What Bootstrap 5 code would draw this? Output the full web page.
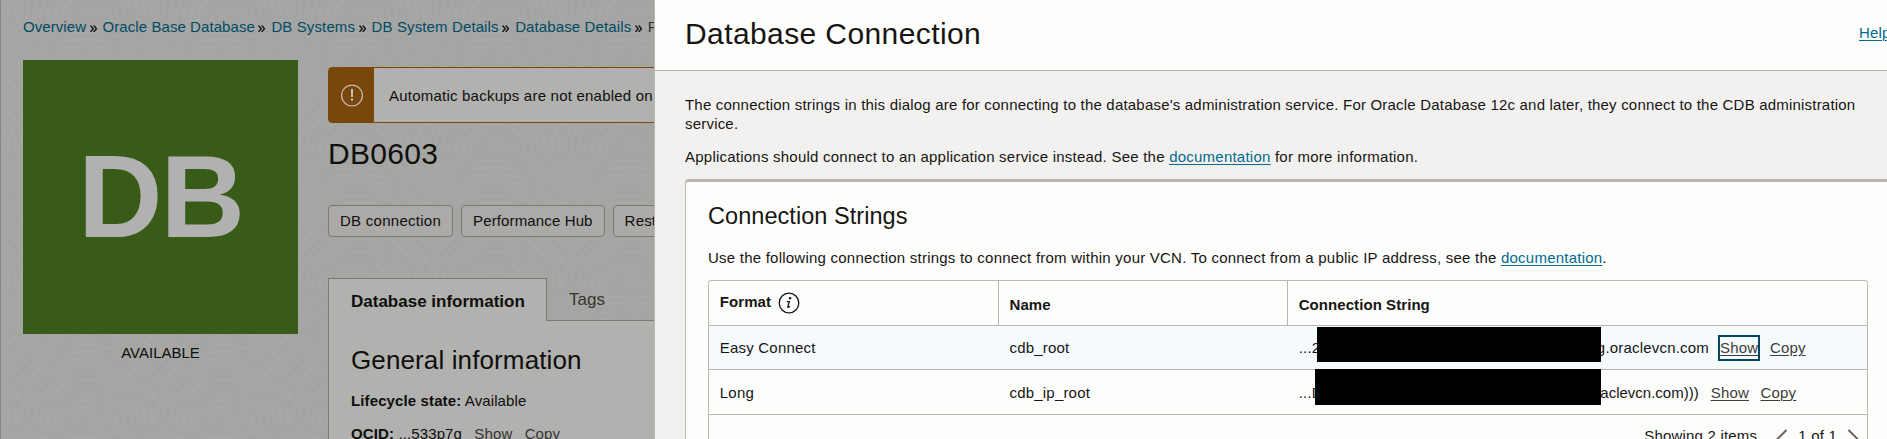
<!DOCTYPE html>
<html lang="en">
<head>
<meta charset="utf-8">
<meta name="viewport" content="width=device-width, initial-scale=1">
<title>Database Connection</title>
<link href="https://cdn.jsdelivr.net/npm/bootstrap@5.3.0/dist/css/bootstrap.min.css" rel="stylesheet">
<style>
  body { font-family: "Liberation Sans", Arial, sans-serif; font-size: 15px; line-height: 19px; color: #161513; height: 439px; background: #a5a4a2; white-space: nowrap; }
  a { color: #006b8f; }
  h1, h2, p { margin: 0; font-weight: 400; }

  /* dimmed page behind the drawer */
  .backpage { width: 654px; height: 439px; color: #0f0f0d; border-left: 1px solid #858583; padding-left: 22px;
    background: repeating-radial-gradient(circle at 50% 100%, rgba(80,85,80,.04) 0, transparent 3.5px, rgba(80,85,80,.04) 7px) 153px 290px / 136px 135px #a7a7a5; }
  .crumbs { height: 60px; padding-top: 17px; letter-spacing: .07px; }
  .crumbs a, .crumbs svg, .crumbs span { flex: none; }
  .crumbs a { color: #004b64; text-decoration: none; }
  .crumbs a:nth-of-type(n+3) { letter-spacing: .12px; }
  .crumbs svg { width: 7.5px; height: 7.5px; margin: 7.5px 5.4px 0 3.6px; }
  .tile { width: 275px; height: 274px; background: #385b18; color: #b1b1b1; font-weight: 700; font-size: 117px; line-height: 1; padding-bottom: 2px; letter-spacing: -2px; }
  .state { width: 275px; padding-top: 9px; }
  .details { width: 326px; margin-left: 30px; padding-top: 7px; }
  .notice { height: 56px; width: 500px; border: 1px solid #79460b; border-radius: 4px; background: #b1b1af; letter-spacing: .22px; }
  .notice-icon { width: 45px; background: #79460b; }
  .notice-text { padding-left: 15px; }
  .dbname { font-size: 30px; line-height: 36px; margin-top: 13px; letter-spacing: .3px; }
  .acts { margin-top: 33px; gap: 8px; }
  .acts .btn { height: 32px; padding: 0 11px; border: 1px solid #7c7875; border-radius: 4px; color: #0f0f0d; font-size: 15px; line-height: 30px; letter-spacing: .2px; background: #abaaa8; }
  .acts .btn:first-child { letter-spacing: .27px; }
  .acts .btn:nth-child(2) { letter-spacing: .13px; }
  .tabrow { margin-top: 41px; height: 43px; }
  .tab-on { width: 219px; border: 1px solid #7c7875; border-bottom: 0; background: #b1b1af; padding: 13px 0 0 22px; font-size: 17px; font-weight: 700; }
  .tab-off { border-bottom: 1px solid #7c7875; padding: 12px 0 0 22px; font-size: 17px; color: #363533; }
  .tabpane { width: 600px; height: 119px; background: #b1b1af; border-left: 1px solid #7c7875; padding-left: 22px; letter-spacing: .12px; }
  .tabpane h2 { font-size: 26px; line-height: 30px; padding-top: 24px; }
  .life { margin-top: 16px; }
  .ocid { margin-top: 14px; }
  .quiet { color: #363533; text-decoration: none; }

  /* drawer */
  .drawer { width: 1233px; height: 439px; background: #f3f1f0; border-left: 1px solid #bcb6b1; letter-spacing: .2px; }
  .drawer-head { height: 71px; background: #fdfdfc; border-bottom: 1px solid #bcb6b1; padding-left: 30px; width: 1250px; }
  .drawer-head h1 { font-size: 30px; line-height: 36px; padding-top: 16px; letter-spacing: .4px; }
  .drawer-head a { width: 46px; padding-top: 23px; }
  .intro { padding: 24px 0 0 30px; height: 108px; }
  .app-note { margin-top: 14px; letter-spacing: .23px; }
  .drawer a { text-decoration-thickness: 1px; text-underline-offset: 2px; }
  .strings { width: 1300px; margin-left: 30px; height: 300px; background: #fdfdfc; border: 1px solid #bcb6b1; border-top-width: 3px; border-radius: 4px; padding: 19px 0 0 22px; }
  .strings h2 { font-size: 23.5px; line-height: 30px; letter-spacing: .05px; }
  .vcn-note { margin-top: 17px; letter-spacing: .23px; }
  .grid-table { width: 1160px; border: 1px solid #bcb6b1; border-radius: 3px; margin-top: 13px; height: 240px; }
  .trow { height: 45px; border-bottom: 1px solid #bcb6b1; }
  .trow > div { flex: 0 0 289.2px; padding-left: 11.3px; }
  .trow > div:first-child { padding-left: 10.8px; }
  .trow > div:last-child { flex: 1 1 0; }
  .thead-row { font-weight: 700; letter-spacing: .07px; }
  .thead-row > div { padding-top: 14px; }
  .thead-row > div:first-child { padding-top: 11px; }
  .thead-row > div + div { border-left: 1px solid #bcb6b1; padding-left: 10.3px; }
  .thead-row svg { margin-left: 6.5px; }
  .focused { background: #f5fafd; height: 44px; }
  .redact { background: #000; position: relative; flex: none; }
  .r-one { width: 284.5px; height: 35px; margin: -6px -4.2px 0 -3.8px; }
  .r-two { width: 286px; height: 36px; margin: -10px -1px 0 -7.5px; }
  .t-two { letter-spacing: 0; }
  .quiet2 { color: #3f3d3a; }
  .ring { outline: 2px solid #00475f; padding: 1px 0 2px; height: 22px; margin: 1px 0 0 11px; }
  .s-two { margin-left: 12px; }
  .copylink { margin-left: 11.5px; }
  .pager { padding: 11px 8px 0 0; }
  .pager svg { margin-top: 3px; }
  .page-no { margin: 0 10px; }
  .page-count { margin-right: 19px; }
</style>
</head>
<body class="overflow-hidden">
<div class="d-flex">
  <main class="backpage overflow-hidden flex-shrink-0">
    <nav class="crumbs d-flex align-items-start">
      <a href="#">Overview</a><svg viewBox="0 0 7 7"><path d="M.5.5 3 3.5.5 6.5M3.5.5 6 3.5 3.5 6.5" fill="none" stroke="#161513" stroke-width="1.3"/></svg>
      <a href="#">Oracle Base Database</a><svg viewBox="0 0 7 7"><path d="M.5.5 3 3.5.5 6.5M3.5.5 6 3.5 3.5 6.5" fill="none" stroke="#161513" stroke-width="1.3"/></svg>
      <a href="#">DB Systems</a><svg viewBox="0 0 7 7"><path d="M.5.5 3 3.5.5 6.5M3.5.5 6 3.5 3.5 6.5" fill="none" stroke="#161513" stroke-width="1.3"/></svg>
      <a href="#">DB System Details</a><svg viewBox="0 0 7 7"><path d="M.5.5 3 3.5.5 6.5M3.5.5 6 3.5 3.5 6.5" fill="none" stroke="#161513" stroke-width="1.3"/></svg>
      <a href="#">Database Details</a><svg viewBox="0 0 7 7"><path d="M.5.5 3 3.5.5 6.5M3.5.5 6 3.5 3.5 6.5" fill="none" stroke="#161513" stroke-width="1.3"/></svg>
      <span class="quiet">P</span>
    </nav>
    <div class="d-flex">
      <div class="flex-shrink-0">
        <div class="tile d-flex align-items-center justify-content-center">DB</div>
        <div class="state text-center">AVAILABLE</div>
      </div>
      <div class="details flex-shrink-0">
        <div class="notice d-flex align-items-center">
          <div class="notice-icon h-100 d-flex align-items-center justify-content-center">
            <svg width="24" height="24" viewBox="0 0 24 24"><circle cx="12" cy="12.5" r="10.4" fill="none" stroke="#c2b5a6" stroke-width="1.3"/><path d="M12 6v8M12 15.6v2.2" stroke="#c9c0b5" stroke-width="2"/></svg>
          </div>
          <span class="notice-text">Automatic backups are not enabled on</span>
        </div>
        <h1 class="dbname">DB0603</h1>
        <div class="acts d-flex">
          <button class="btn">DB connection</button>
          <button class="btn">Performance Hub</button>
          <button class="btn">Restore</button>
        </div>
        <div class="tabrow d-flex">
          <div class="tab-on flex-shrink-0">Database information</div>
          <div class="tab-off flex-grow-1">Tags</div>
        </div>
        <div class="tabpane">
          <h2>General information</h2>
          <p class="life"><b>Lifecycle state:</b> Available</p>
          <p class="ocid"><b>OCID:</b> ...533p7q <span class="quiet ms-2">Show</span> <span class="quiet ms-2">Copy</span></p>
        </div>
      </div>
    </div>
  </main>

  <section class="drawer overflow-hidden flex-shrink-0">
    <header class="drawer-head d-flex justify-content-between">
      <h1>Database Connection</h1>
      <a href="#">Help</a>
    </header>
    <div class="intro">
      <p>The connection strings in this dialog are for connecting to the database's administration service. For Oracle Database 12c and later, they connect to the CDB administration<br>service.</p>
      <p class="app-note">Applications should connect to an application service instead. See the <a href="#">documentation</a> for more information.</p>
    </div>
    <div class="strings">
      <h2>Connection Strings</h2>
      <p class="vcn-note">Use the following connection strings to connect from within your VCN. To connect from a public IP address, see the <a href="#">documentation</a>.</p>
      <div class="grid-table">
        <div class="trow thead-row d-flex">
          <div class="d-flex align-items-start">Format
            <svg width="22" height="22" viewBox="0 0 22 22"><circle cx="11" cy="11" r="9.8" fill="none" stroke="#161513" stroke-width="1.3"/><circle cx="12.1" cy="6.3" r="1.2" fill="#161513"/><path d="M9 9.7h2.3l-1.4 5c-.3 1.1.8.9 2-.5" fill="none" stroke="#161513" stroke-width="1.3"/></svg>
          </div>
          <div>Name</div>
          <div>Connection String</div>
        </div>
        <div class="trow focused d-flex align-items-center">
          <div>Easy Connect</div>
          <div>cdb_root</div>
          <div class="d-flex align-items-center"><span>...2</span><span class="redact r-one"></span><span>g.oraclevcn.com</span><a href="#" class="quiet2 ring">Show</a><a href="#" class="quiet2 copylink">Copy</a></div>
        </div>
        <div class="trow d-flex align-items-center">
          <div>Long</div>
          <div>cdb_ip_root</div>
          <div class="d-flex align-items-center"><span>...D</span><span class="redact r-two"></span><span class="t-two">aclevcn.com)))</span><a href="#" class="quiet2 s-two">Show</a><a href="#" class="quiet2 copylink">Copy</a></div>
        </div>
        <div class="pager d-flex justify-content-end align-items-start">
          <span class="page-count">Showing 2 items</span>
          <svg width="12" height="20" viewBox="0 0 12 20"><path d="M10.5 1 1.5 10l9 9" fill="none" stroke="#6a6160" stroke-width="2"/></svg>
          <span class="page-no">1 of 1</span>
          <svg width="12" height="20" viewBox="0 0 12 20"><path d="M1.5 1l9 9-9 9" fill="none" stroke="#6a6160" stroke-width="2"/></svg>
        </div>
      </div>
    </div>
  </section>
</div>
<script src="https://cdn.jsdelivr.net/npm/bootstrap@5.3.0/dist/js/bootstrap.bundle.min.js"></script>
</body>
</html>
